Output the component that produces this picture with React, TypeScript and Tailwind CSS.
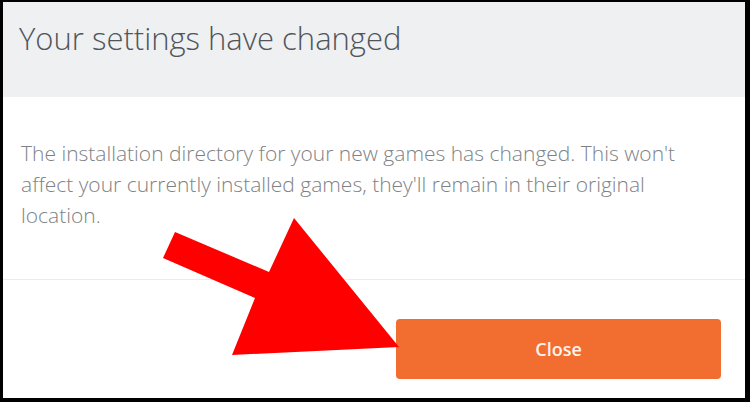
import React from "react";

const Arrow = () => (
  <svg
    className="absolute left-0 top-0 pointer-events-none"
    width="750"
    height="402"
    viewBox="0 0 750 402"
  >
    <polygon
      points="175,232 269,272 294,218 399,347 232,355 255,298 163,258"
      fill="#ff0000"
    />
  </svg>
);

const App = () => {
  return (
    <div className="relative w-[750px] h-[402px] overflow-hidden bg-black">
      <div
        className="absolute left-[3px] top-[2px] right-[5px] bottom-[4px] flex flex-col bg-white"
        style={{ fontFamily: '"Open Sans", "Liberation Sans", sans-serif' }}
      >
        <div className="h-[95px] bg-[#eef0f2] pl-[16px] pt-[16px]">
          <h1 className="text-[31px] font-light text-[#50555a] leading-[40px]">
            Your settings have changed
          </h1>
        </div>
        <div className="h-[183px] border-b border-[#ececec] pl-[18px] pr-6 pt-[41px]">
          <p className="text-[21px] font-light text-[#7e8285] leading-[31px] max-w-[680px]">
            The installation directory for your new games has changed. This won't
            affect your currently installed games, they'll remain in their original
            location.
          </p>
        </div>
        <div className="flex flex-1 justify-end pr-[24px] pt-[39px]">
          <button className="w-[325px] h-[60px] rounded-[4px] bg-[#f26d30] text-[#fff3ea] text-[18px] font-semibold">
            Close
          </button>
        </div>
      </div>
      <Arrow />
    </div>
  );
};

export default App;
